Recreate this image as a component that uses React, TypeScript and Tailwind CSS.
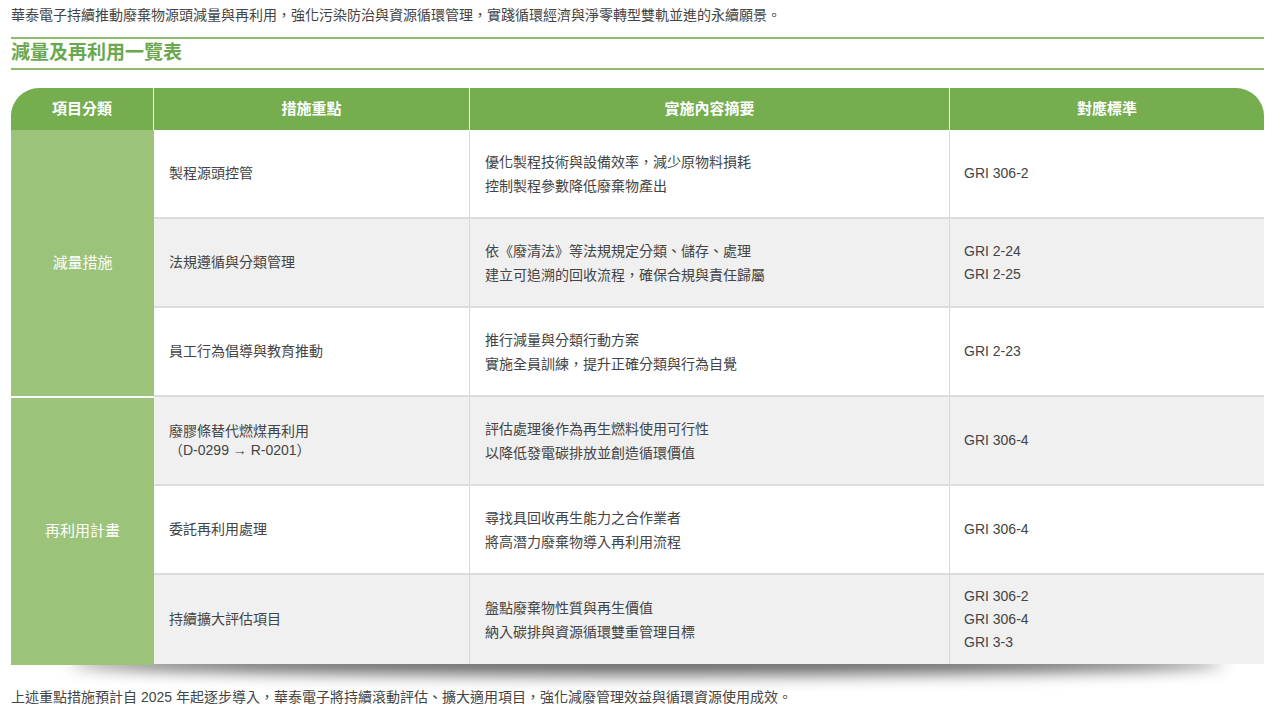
import React from "react";

const rows = [
  { a: "製程源頭控管", b: ["優化製程技術與設備效率，減少原物料損耗", "控制製程參數降低廢棄物產出"], c: ["GRI 306-2"], bg: "bg-white" },
  { a: "法規遵循與分類管理", b: ["依《廢清法》等法規規定分類、儲存、處理", "建立可追溯的回收流程，確保合規與責任歸屬"], c: ["GRI 2-24", "GRI 2-25"], bg: "bg-[#f0f0f0]" },
  { a: "員工行為倡導與教育推動", b: ["推行減量與分類行動方案", "實施全員訓練，提升正確分類與行為自覺"], c: ["GRI 2-23"], bg: "bg-white" },
  { a: "廢膠條替代燃煤再利用\n（D-0299 → R-0201）", b: ["評估處理後作為再生燃料使用可行性", "以降低發電碳排放並創造循環價值"], c: ["GRI 306-4"], bg: "bg-[#f0f0f0]" },
  { a: "委託再利用處理", b: ["尋找具回收再生能力之合作業者", "將高潛力廢棄物導入再利用流程"], c: ["GRI 306-4"], bg: "bg-white" },
  { a: "持續擴大評估項目", b: ["盤點廢棄物性質與再生價值", "納入碳排與資源循環雙重管理目標"], c: ["GRI 306-2", "GRI 306-4", "GRI 3-3"], bg: "bg-[#f0f0f0]" },
];

function Row({ r, last }: { r: typeof rows[0]; last?: boolean }) {
  return (
    <div className={`flex h-[89px] ${r.bg} ${last ? "" : "border-b-2 border-[#dcdcdc]"}`}>
      <div className="w-[316px] flex items-center pl-[15px] border-r border-[#d8d8d8] whitespace-pre-line leading-[19px]">{r.a}</div>
      <div className="w-[480px] flex flex-col justify-center pl-[15px] border-r border-[#d8d8d8] leading-[24px]">
        {r.b.map((t) => <div key={t}>{t}</div>)}
      </div>
      <div className="flex-1 flex flex-col justify-center pl-[14px] leading-[23px]">
        {r.c.map((t) => <div key={t}>{t}</div>)}
      </div>
    </div>
  );
}

export default function App() {
  return (
    <div className="w-[1275px] h-[718px] bg-white text-[#444] text-[14px] overflow-hidden" style={{ fontFamily: '"Liberation Sans", "Noto Sans CJK TC", sans-serif' }}>
      <div className="pl-[11px] pt-[5px] leading-[20px]">華泰電子持續推動廢棄物源頭減量與再利用，強化污染防治與資源循環管理，實踐循環經濟與淨零轉型雙軌並進的永續願景。</div>
      <div className="mx-[11px] mt-[12px] border-t-2 border-b-2 border-[#8cbd6a] h-[33px] flex items-center">
        <span className="text-[#6aa84f] text-[19px] font-bold">減量及再利用一覽表</span>
      </div>
      <div className="relative mx-[11px] mt-[18px]">
        <div className="absolute left-[60px] right-[40px] bottom-[-10px] h-[24px] rounded-[50%] bg-black/60 blur-[8px]" />
        <div className="relative">
          <div className="flex h-[42px] bg-[#75ad4f] text-white font-bold text-[15px] rounded-t-[28px]">
            <div className="w-[143px] flex items-center justify-center border-r border-white">項目分類</div>
            <div className="w-[316px] flex items-center justify-center border-r border-white">措施重點</div>
            <div className="w-[480px] flex items-center justify-center border-r border-white">實施內容摘要</div>
            <div className="flex-1 flex items-center justify-center">對應標準</div>
          </div>
          <div className="flex">
            <div className="w-[143px] flex flex-col text-white text-[15px]">
              <div className="h-[268px] bg-[#9bc47a] flex items-center justify-center border-b-2 border-white">減量措施</div>
              <div className="h-[267px] bg-[#9bc47a] flex items-center justify-center">再利用計畫</div>
            </div>
            <div className="flex-1 flex flex-col">
              {rows.map((r, i) => <Row key={i} r={r} last={i === 5} />)}
            </div>
          </div>
        </div>
      </div>
      <div className="pl-[11px] mt-[22px] leading-[20px]">上述重點措施預計自 2025 年起逐步導入，華泰電子將持續滾動評估、擴大適用項目，強化減廢管理效益與循環資源使用成效。</div>
    </div>
  );
}
